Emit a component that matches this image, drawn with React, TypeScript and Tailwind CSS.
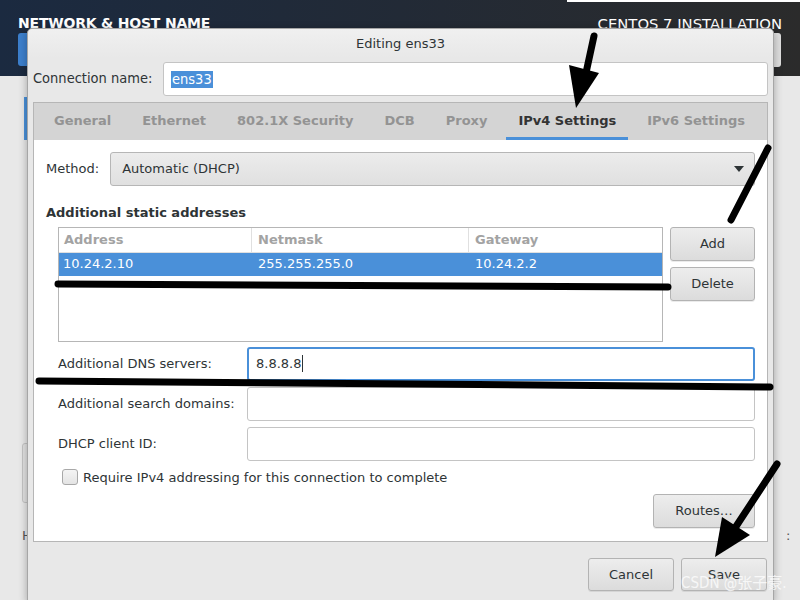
import React from "react";

const ui = { fontFamily: '"DejaVu Sans", "Noto Sans", sans-serif' };
const cond = { fontFamily: '"DejaVu Sans Condensed", "DejaVu Sans", sans-serif' };

function Btn({ children, className = "" }: { children: React.ReactNode; className?: string }) {
  return (
    <div
      className={
        "flex items-center justify-center rounded-[3px] border border-[#b3b3b3] bg-gradient-to-b from-[#ededed] to-[#dcdcdc] text-[13px] text-[#2e3436] shadow-[0_1px_0_rgba(0,0,0,0.08)] " +
        className
      }
    >
      {children}
    </div>
  );
}

function Field({ children, focus = false }: { children?: React.ReactNode; focus?: boolean }) {
  return (
    <div
      className={
        "flex h-[34px] flex-1 items-center rounded-[3px] bg-white px-[8px] text-[13px] text-[#2e3436] " +
        (focus ? "border-2 border-[#4a90d9] pl-[7px]" : "border border-[#c4c4c4]")
      }
    >
      {children}
    </div>
  );
}

const tabs = ["General", "Ethernet", "802.1X Security", "DCB", "Proxy", "IPv4 Settings", "IPv6 Settings"];

export default function App() {
  return (
    <div className="relative h-[600px] w-[800px] overflow-hidden bg-[#e8e8e8]" style={ui}>
      {/* installer header */}
      <div className="relative h-[76px] bg-gradient-to-r from-[#1b2a40] via-[#222a36] to-[#2b2b2b]">
        <div className="absolute right-0 top-0 h-[2px] w-[233px] bg-white" />
        <div className="flex items-start justify-between pl-[18px] pr-[18px] pt-[13px]">
          <div className="text-[14px] font-bold tracking-[-0.2px] text-white">NETWORK &amp; HOST NAME</div>
          <div className="text-[14.8px] text-white">CENTOS 7 INSTALLATION</div>
        </div>
      </div>
      <div className="absolute left-[18px] top-[33px] h-[33px] w-[14px] rounded-[3px] bg-[#3c7fcc]" />
      <div className="absolute left-[768px] top-[33px] h-[34px] w-[13px] rounded-[3px] bg-[#dedede]" />
      <div className="absolute left-[24px] top-[97px] h-[43px] w-[3px] bg-[#4a90d9]" />
      <div className="absolute left-[22px] top-[443px] h-[60px] w-[6px] rounded-l-[3px] border border-[#c4c4c4] bg-[#e2e2e2]" />
      <div className="absolute left-[22px] top-[526px] text-[13px] text-[#555]">H</div>
      <div className="absolute left-[786px] top-[526px] text-[13px] text-[#555]">:</div>

      {/* dialog window */}
      <div className="absolute left-[27px] top-[28px] flex h-[574px] w-[747px] flex-col rounded-t-[5px] border border-[#a6a6a6] bg-[#e8e8e8] shadow-[0_2px_8px_rgba(0,0,0,0.3)]">
        <div className="flex h-[29px] items-center justify-center rounded-t-[5px] bg-gradient-to-b from-[#f0f0f0] to-[#e8e8e8] text-[13px] text-[#2e3436]">
          Editing ens33
        </div>
        <div className="flex items-center gap-[12px] px-[5px] pt-[4px]">
          <div className="w-[118px] whitespace-nowrap text-[14.5px] text-[#2e3436]" style={cond}>Connection name:</div>
          <div className="flex h-[34px] flex-1 items-center rounded-[3px] border border-[#c4c4c4] bg-white px-[7px]">
            <span className="bg-[#4a90d9] px-[1px] text-[14.5px] leading-[17px] text-white" style={cond}>ens33</span>
          </div>
        </div>

        {/* notebook */}
        <div className="mx-[5px] mt-[6px] flex h-[440px] flex-col border border-[#b6b6b6] bg-white">
          <div className="flex h-[37px] items-stretch gap-[7px] bg-[#d4d4d4] pl-[8px]">
            {tabs.map((t) => {
              const on = t === "IPv4 Settings";
              return (
                <div
                  key={t}
                  className={
                    "flex items-center whitespace-nowrap px-[12px] pb-[1px] text-[13px] font-bold " +
                    (on ? "border-b-[3px] border-[#4a90d9] pt-[2px] text-[#333]" : "text-[#939393]")
                  }
                >
                  {t}
                </div>
              );
            })}
          </div>

          <div className="flex flex-1 flex-col px-[12px] pt-[12px] text-[13px] text-[#2e3436]">
            <div className="flex items-center gap-[11px]">
              <div>Method:</div>
              <div className="flex h-[34px] flex-1 items-center justify-between rounded-[3px] border border-[#b6b6b6] bg-gradient-to-b from-[#ececec] to-[#e0e0e0] pl-[11px] pr-[9px]">
                <span>Automatic (DHCP)</span>
                <svg width="12" height="8" viewBox="0 0 12 8"><path d="M1 1h10L6 7z" fill="#2e3436" /></svg>
              </div>
            </div>

            <div className="mt-[17px] font-bold">Additional static addresses</div>

            <div className="ml-[12px] mt-[4px] flex gap-[7px]">
              <div className="h-[115px] w-[606px] border border-[#b6b6b6] bg-white">
                <div className="flex h-[25px] border-b border-[#e0e0e0] font-bold text-[#a3a3a3]">
                  <div className="flex w-[193px] items-center border-r border-[#e0e0e0] px-[5px]">Address</div>
                  <div className="flex w-[217px] items-center border-r border-[#e0e0e0] px-[6px]">Netmask</div>
                  <div className="flex flex-1 items-center px-[6px]">Gateway</div>
                </div>
                <div className="flex h-[23px] bg-[#4a90d9] text-white">
                  <div className="flex w-[193px] items-center px-[4px]">10.24.2.10</div>
                  <div className="flex w-[217px] items-center px-[6px]">255.255.255.0</div>
                  <div className="flex flex-1 items-center px-[6px]">10.24.2.2</div>
                </div>
              </div>
              <div className="flex flex-col gap-[6px]">
                <Btn className="h-[34px] w-[85px]">Add</Btn>
                <Btn className="h-[34px] w-[85px]">Delete</Btn>
              </div>
            </div>

            <div className="ml-[12px] mt-[5px] flex flex-col gap-[6px]">
              <div className="flex items-center">
                <div className="w-[189px]">Additional DNS servers:</div>
                <Field focus>
                  8.8.8.8<span className="ml-[1px] inline-block h-[17px] w-[1px] bg-[#2e3436]" />
                </Field>
              </div>
              <div className="flex items-center">
                <div className="w-[189px]">Additional search domains:</div>
                <Field />
              </div>
              <div className="flex items-center">
                <div className="w-[189px]">DHCP client ID:</div>
                <Field />
              </div>
            </div>

            <div className="ml-[16px] mt-[7px] flex items-center gap-[5px]">
              <div className="h-[16px] w-[16px] rounded-[3px] border border-[#a8a8a8] bg-gradient-to-b from-[#f4f4f4] to-[#e4e4e4]" />
              <div>Require IPv4 addressing for this connection to complete</div>
            </div>

            <div className="mt-[7px] flex justify-end">
              <Btn className="h-[34px] w-[102px]">Routes…</Btn>
            </div>
          </div>
        </div>

        <div className="mt-[16px] flex justify-end gap-[7px] pr-[6px]">
          <Btn className="h-[33px] w-[86px]">Cancel</Btn>
          <Btn className="h-[33px] w-[86px]">Save</Btn>
        </div>
      </div>

      {/* marker annotations drawn over the screenshot */}
      <svg className="pointer-events-none absolute left-0 top-0" width="800" height="600" viewBox="0 0 800 600">
        <g stroke="#000" strokeWidth="7" strokeLinecap="round" fill="none">
          <path d="M594 36 L584 82" />
          <path d="M768 148 L731 220" />
          <path d="M58 284 L668 287" />
          <path d="M39 381 L770 387" />
          <path d="M777 464 L735 528" />
        </g>
        <path d="M569 65 L599 73 L576 108 Z" fill="#000" />
        <path d="M722 517 L750 535 L715 557 Z" fill="#000" />
      </svg>

      <div
        className="absolute left-[681px] top-[572px] whitespace-nowrap text-[15px] text-white/75"
        style={{ fontFamily: '"DejaVu Sans Condensed", "Noto Sans CJK SC", sans-serif' }}
      >
        CSDN @张子豪.
      </div>
    </div>
  );
}
